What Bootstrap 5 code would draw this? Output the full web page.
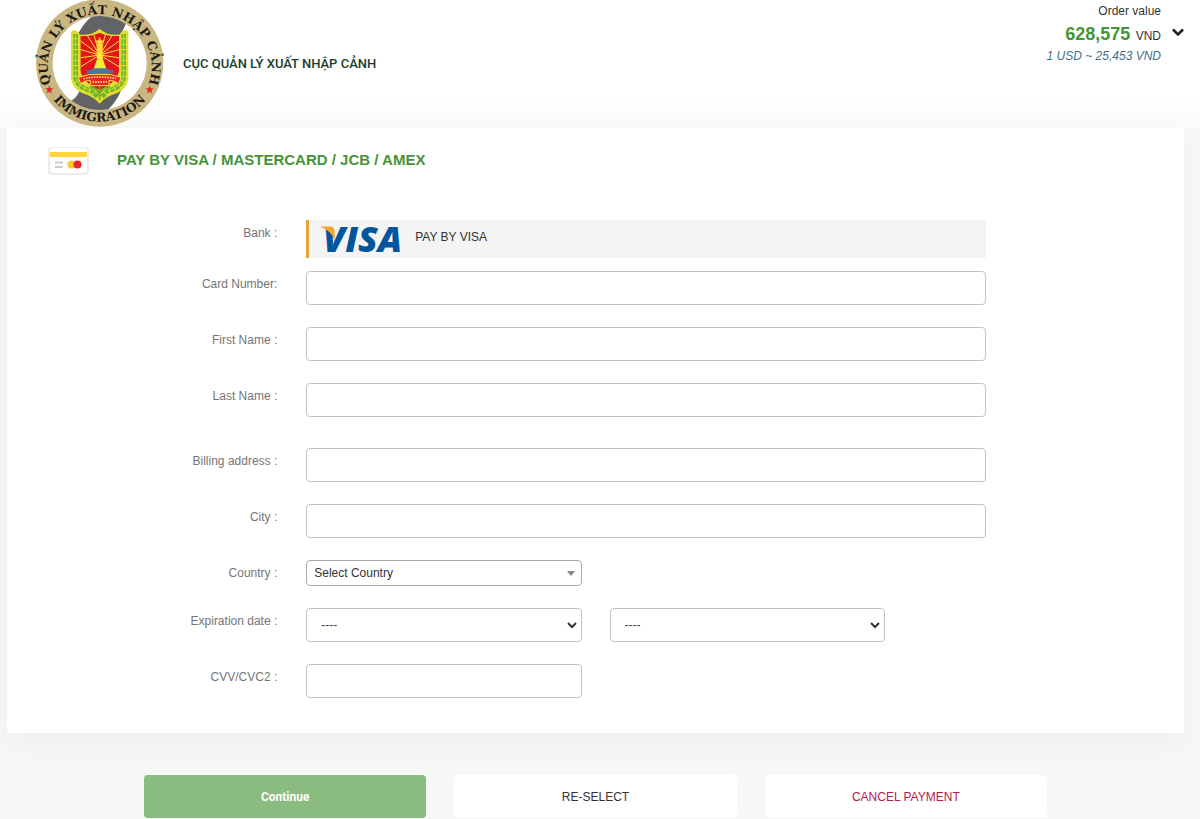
<!DOCTYPE html>
<html lang="en">
<head>
<meta charset="utf-8">
<meta name="viewport" content="width=device-width, initial-scale=1">
<title>Pay by Visa / Mastercard / JCB / Amex</title>
<link href="https://cdn.jsdelivr.net/npm/bootstrap@5.3.0/dist/css/bootstrap.min.css" rel="stylesheet">
<style>
body{font-family:"Liberation Sans",Arial,sans-serif;font-size:12px;line-height:18px;background:#f7f7f7;color:#333}
.site-head{height:128px;background:linear-gradient(#fff 75%,#fafafa)}
.emblem{width:140px;height:128px;margin-right:19px}
.org-name{font-family:Roboto,sans-serif;font-size:13px;font-weight:500;color:#1b3d2a;margin:0}
.order-box{line-height:22px}
.order-sum{font-size:18px;color:#469438;margin-right:2px}
.order-rate{color:#3f6f8c;line-height:18px}
.order-toggle{margin-right:13px}
.pay-main{margin:0 16px 0 7px}
.pay-card{background:#fff;box-shadow:0 12px 32px rgba(0,0,0,.035);padding-bottom:35px}
.pay-head{margin-bottom:44px}
.pay-title{font-size:15px;color:#469438;line-height:20px;margin:0 0 0 10px}
.pay-line{display:grid;grid-template-columns:minmax(0,271fr) minmax(0,275fr) minmax(0,275fr) minmax(0,73fr) minmax(0,170fr);column-gap:28px;margin-bottom:22px}
.pay-line label,.pay-line .cap{grid-column:1;text-align:right;color:#757575;padding:4px 1px 0 0;height:26px}
.bank-line{margin-bottom:13px}
.name-end{margin-bottom:31px}
.span-full{grid-column:2/5}
.form-control,.native-select{height:34px;border:1px solid #c3c3c3;border-radius:4px;font-size:12px;background-color:#fff}
.native-select{width:100%;color:#444;appearance:none;padding:0 14px;background:#fff url("data:image/svg+xml,%3Csvg xmlns='http://www.w3.org/2000/svg' width='10' height='8'%3E%3Cpath d='M1 2l4 4 4-4' fill='none' stroke='%23333' stroke-width='2'/%3E%3C/svg%3E") no-repeat right 4px center}
.country-select{height:26px;padding:0 7px;border-color:#aaa;color:#333;background-image:url("data:image/svg+xml,%3Csvg xmlns='http://www.w3.org/2000/svg' width='8' height='5'%3E%3Cpath d='M0 0h8L4 5z' fill='%23888'/%3E%3C/svg%3E");background-position:right 6px center}
.bank-box{background:#f4f4f4;border-left:3px solid #e8a33d;height:38px}
.bank-box span{margin-left:10px;padding-bottom:4px}
.visa-mark{overflow:visible}
.pay-actions{max-width:903px;column-gap:28px;margin-top:42px}
.pay-actions .btn{flex:1 1 0;height:43px;font-size:12px;border:0;border-radius:4px;background:#fff;color:#333}
.pay-actions .btn-go{background:#8abb80;color:#fff;font-family:Roboto,sans-serif}
.pay-actions .btn-stop{color:#b3204d}
@media(max-width:700px){
.pay-line{grid-template-columns:1fr;padding:0 16px}
.pay-line>*,.span-full{grid-column:1!important}
.pay-line label,.pay-line .cap{text-align:left}
.pay-actions{flex-direction:column;gap:12px;padding:0 16px}
.pay-actions .btn{flex:none}
}
</style>
</head>
<body>
<header class="site-head d-flex justify-content-between">
<div class="d-flex align-items-center">
<svg class="emblem flex-shrink-0 ms-4" viewBox="-18 0 420 384" role="img" aria-label="Immigration emblem">
<defs>
<path id="arcTop" d="M61 248A156 156 0 1 1 357 248"/>
<path id="arcLow" d="M57 282A181 181 0 0 0 361 282"/>
<clipPath id="disc"><circle cx="209" cy="189" r="141"/></clipPath>
<clipPath id="shieldIn"><path d="M151 108Q185 110 209 98Q233 110 267 108V210Q264 245 209 270Q154 245 151 210Z"/></clipPath>
</defs>
<circle cx="209" cy="189" r="191" fill="#c9b681"/>
<circle cx="209" cy="189" r="141" fill="#fff"/>
<path clip-path="url(#disc)" fill="#626365" d="M145 100Q165 62 192 45H300L272 105L285 240Q268 300 228 335H130L115 305Q138 300 150 270Z"/>
<path fill="#e0dd2c" d="M123 108V95L133 89Q145 94 150 104Q185 108 209 86Q233 108 268 104Q273 94 285 89L295 95V235Q292 265 262 279Q225 290 209 311Q193 290 156 279Q126 265 123 235Z"/>
<g clip-path="url(#shieldIn)"><path fill="#e3151c" d="M140 80H280V280H140Z"/>
<path stroke="#fbe62f" stroke-width="3" d="M209 165L120 100M209 165L120 140M209 165L120 178M209 165L120 220M209 165L155 80M209 165L185 80M209 165L233 80M209 165L263 80M209 165L300 100M209 165L300 140M209 165L300 178M209 165L300 220"/></g>
<path fill="none" stroke="#6cb52c" stroke-width="14" stroke-dasharray="13 3" d="M137 102V228Q139 262 185 272L204 292M281 102V228Q279 262 233 272L214 292"/>
<path fill="none" stroke="#e9e82e" stroke-width="2" d="M137 100V230Q140 260 185 272M281 100V230Q278 260 233 272"/>
<path fill="#ffd93a" d="M209 110L213 121L224 122L215 129L218 140L216 212H202L200 140L203 129L194 122L205 121Z"/>
<path fill="#f7ee37" d="M190 210L202 175L209 155L218 175L230 210Z"/>
<path fill="#4776a4" d="M170 220V211H182L190 205H230L239 211H250V220L209 225Z"/>
<path fill="#e92824" stroke="#ffe04a" stroke-width="3" d="M145 232Q177 220 209 223Q241 220 273 232L266 251Q250 240 237 241V257H181V241Q167 240 152 251Z"/>
<path stroke="#ffe9a0" stroke-width="4" stroke-dasharray="5 3" fill="none" d="M160 236Q209 226 258 236M187 246H231"/>
<path fill="none" stroke="#5fae2b" stroke-width="5" d="M209 258V300M180 260Q195 260 208 280Q223 260 240 260"/>
<g fill="#1d1a16" font-family="DejaVu Serif,serif" font-weight="bold" font-size="37">
<text text-anchor="middle"><textPath href="#arcTop" startOffset="50%">QUẢN LÝ XUẤT NHẬP CẢNH</textPath></text>
<text text-anchor="middle"><textPath href="#arcLow" startOffset="50%">IMMIGRATION</textPath></text></g>
<path id="st" fill="#e42127" d="M58 256L61 265L70 265L63 271L66 280L58 275L50 280L53 271L46 265L55 265Z"/>
<use href="#st" x="301"/>
</svg>
<h1 class="org-name">CỤC QUẢN LÝ XUẤT NHẬP CẢNH</h1>
</div>
<div class="d-flex">
<div class="order-box text-end pt-1 text-nowrap">
<div class="lh-sm">Order value</div>
<div class="pt-1"><strong class="order-sum">628,575</strong> VND</div>
<em class="order-rate d-block">1 USD ~ 25,453 VND</em>
</div>
<button type="button" class="btn p-0 border-0 align-self-start mt-4 ms-2 order-toggle" aria-label="Show order details"><svg class="d-block" width="18" height="16" viewBox="0 0 18 16"><path d="M4 5.500L9 10.500L14 5.500" fill="none" stroke="#222" stroke-width="2.500"/></svg></button>
</div>
</header>
<main class="pay-main">
<form>
<section class="pay-card">
<div class="pay-head d-flex align-items-center pt-3">
<svg class="ms-4" width="76" height="32" viewBox="31 144 76 32" aria-hidden="true">
<rect x="48" y="147" width="41" height="28" rx="4" fill="#ececec"/><rect x="50" y="148" width="37" height="25" rx="3" fill="#fff"/>
<path fill="#ffd43c" d="M50 152H87V157H50Z"/><path stroke="#ccc" stroke-width="2" d="M55 162.500H63M55 167H63"/>
<circle cx="71.500" cy="164.500" r="4" fill="#ffc928"/><circle cx="77.500" cy="164.500" r="4" fill="#ee2424"/></svg>
<h2 class="pay-title fw-bold">PAY BY VISA / MASTERCARD / JCB / AMEX</h2>
</div>
<div class="pay-line bank-line"><span class="cap">Bank :</span>
<div class="span-full bank-box d-flex align-items-center">
<svg class="visa-mark ms-2" width="88" height="38" viewBox="317 220 88 38" role="img" aria-label="Visa">
<text x="323" y="252" font-family="Open Sans" font-weight="800" font-style="italic" font-size="36" fill="#00559f">VISA</text>
<path fill="#f4a62a" d="M320 226.500H331Q334 227 334.500 230L335 240Q331 231 320 226.500Z"/></svg>
<span>PAY BY VISA</span></div></div>
<div class="pay-line"><label for="card">Card Number:</label><input id="card" class="form-control span-full" inputmode="numeric"></div>
<div class="pay-line"><label for="first">First Name :</label><input id="first" class="form-control span-full"></div>
<div class="pay-line name-end"><label for="last">Last Name :</label><input id="last" class="form-control span-full"></div>
<div class="pay-line"><label for="addr">Billing address :</label><input id="addr" class="form-control span-full"></div>
<div class="pay-line"><label for="city">City :</label><input id="city" class="form-control span-full"></div>
<div class="pay-line"><label for="country">Country :</label><select id="country" class="native-select country-select"><option>Select Country</option></select></div>
<div class="pay-line"><label for="month">Expiration date :</label><select id="month" class="native-select"><option>----</option></select><select class="native-select" aria-label="Expiration year"><option>----</option></select></div>
<div class="pay-line mb-0"><label for="cvv">CVV/CVC2 :</label><input id="cvv" class="form-control" inputmode="numeric"></div>
</section>
<div class="pay-actions d-flex mx-auto">
<button type="submit" class="btn btn-go fw-bold">Continue</button>
<button type="reset" class="btn">RE-SELECT</button>
<button type="button" class="btn btn-stop">CANCEL PAYMENT</button>
</div>
</form>
</main>
<script src="https://cdn.jsdelivr.net/npm/bootstrap@5.3.0/dist/js/bootstrap.bundle.min.js"></script>
</body>
</html>
